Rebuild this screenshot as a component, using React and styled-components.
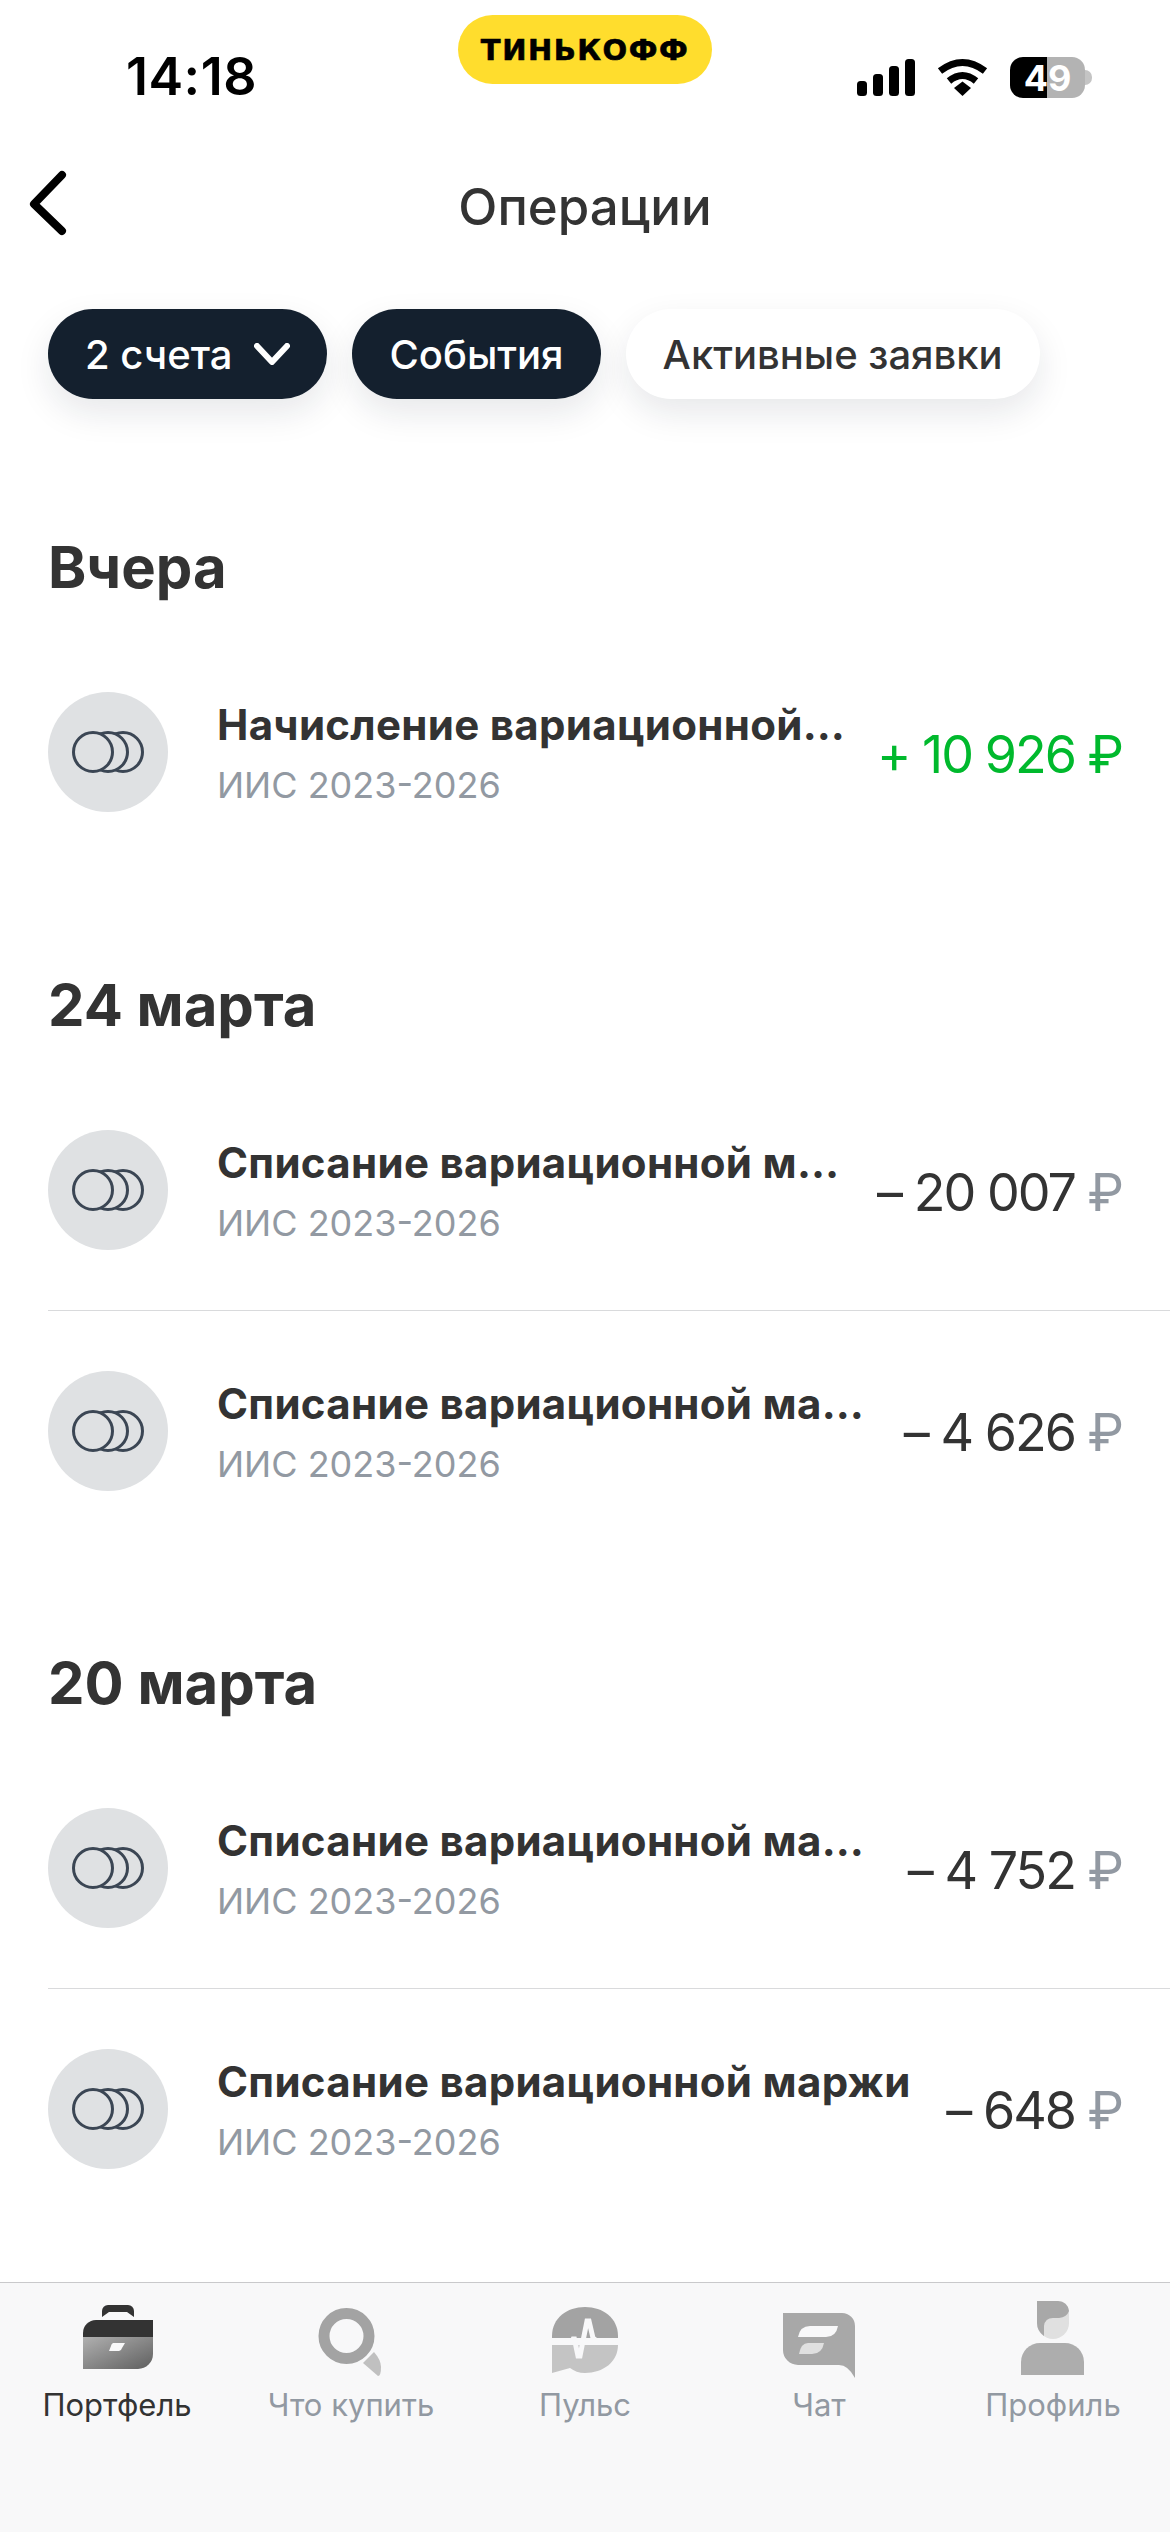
import React from 'react'
import styled, { createGlobalStyle } from 'styled-components'

const Global = createGlobalStyle`
  * { box-sizing: border-box; }
  body { margin: 0; background: #fff; font-family: Inter, "Noto Sans", sans-serif; color: #333; }
`

const Page = styled.div`
  width: 1170px;
  height: 2532px;
  display: flex;
  flex-direction: column;
  overflow: hidden;
`

const StatusBar = styled.div`
  height: 140px;
  display: grid;
  grid-template-columns: 1fr 254px 1fr;
`

const Time = styled.div`
  padding: 49px 0 0 126px;
  font-size: 52px;
  line-height: 56px;
  font-weight: 600;
  letter-spacing: 0.5px;
  color: #000;
`

const Logo = styled.div`
  margin-top: 15px;
  height: 69px;
  border-radius: 35px;
  background: #ffdd2d;
  display: flex;
  align-items: center;
  justify-content: center;
  font-family: "DejaVu Sans", sans-serif;
  font-size: 29px;
  font-weight: 700;
  letter-spacing: 1.5px;
  -webkit-text-stroke: 0.6px #000;
  color: #000;
`

const StatusIcons = styled.div`
  padding: 57px 0 0 145px;
  display: flex;
  align-items: flex-start;
  gap: 22px;
`

const Battery = styled.div`
  position: relative;
  width: 75px;
  height: 41px;
  border-radius: 13px;
  background: linear-gradient(90deg, #000 49%, #b3b3b3 49%);
  display: flex;
  align-items: center;
  justify-content: center;
  font-size: 36px;
  font-weight: 700;
  color: #fff;
  &::after {
    content: '';
    position: absolute;
    right: -7px;
    top: 13px;
    width: 7px;
    height: 15px;
    border-radius: 0 8px 8px 0;
    background: #c4c4c4;
  }
`

const NavBar = styled.div`
  position: relative;
  height: 169px;
  display: flex;
  justify-content: center;
  padding-top: 37px;
  font-size: 51px;
  line-height: 60px;
  font-weight: 500;
  color: #333;
  svg {
    position: absolute;
    left: 24px;
    top: 28px;
  }
`

const Chips = styled.div`
  display: flex;
  gap: 25px;
  padding-left: 48px;
  margin-bottom: 35px;
`

const Chip = styled.div`
  height: 90px;
  padding: 0 37px;
  border-radius: 45px;
  display: flex;
  align-items: center;
  gap: 22px;
  font-size: 40px;
  font-weight: 500;
  white-space: nowrap;
  background: ${({ $dark }) => ($dark ? '#14202e' : '#fff')};
  color: ${({ $dark }) => ($dark ? '#fff' : '#333')};
  box-shadow: 0 14px 34px rgba(20, 32, 46, 0.1);
`

const Section = styled.section`
  margin-top: 98px;
`

const SectionTitle = styled.h2`
  margin: 0 0 30px 48px;
  height: 70px;
  font-size: 58px;
  line-height: 70px;
  font-weight: 700;
  color: #333;
`

const Row = styled.div`
  height: 240px;
  margin-left: 48px;
  padding-right: 48px;
  display: flex;
  align-items: center;
  border-top: ${({ $divider }) => ($divider ? '1px solid #d9dadc' : 'none')};
`

const Avatar = styled.div`
  flex: none;
  width: 120px;
  height: 120px;
  border-radius: 50%;
  background: #dfe1e3;
  display: flex;
  align-items: center;
  justify-content: center;
  margin-right: 49px;
`

const RowText = styled.div`
  flex: 1;
  min-width: 0;
  margin-right: 28px;
  padding-top: 3px;
`

const RowTitle = styled.div`
  font-size: 42px;
  line-height: 50px;
  font-weight: 700;
  letter-spacing: 0.3px;
  color: #333;
  white-space: nowrap;
  overflow: hidden;
  text-overflow: ellipsis;
`

const RowSub = styled.div`
  margin-top: 13px;
  font-size: 36px;
  line-height: 44px;
  color: #9299a2;
`

const Amount = styled.div`
  flex: none;
  margin-top: 5px;
  font-size: 52px;
  line-height: 60px;
  letter-spacing: -2px;
  color: ${({ $plus }) => ($plus ? '#00b92d' : '#333')};
  white-space: nowrap;
  span {
    color: ${({ $plus }) => ($plus ? '#00b92d' : '#9299a2')};
  }
`

const TabBar = styled.nav`
  margin-top: auto;
  height: 250px;
  padding-top: 17px;
  border-top: 1px solid #c9c9cb;
  background: #f8f8f9;
  display: grid;
  grid-template-columns: repeat(5, 1fr);
`

const Tab = styled.div`
  display: flex;
  flex-direction: column;
  align-items: center;
  font-size: 31px;
  line-height: 36px;
  color: ${({ $active }) => ($active ? '#333' : '#9299a2')};
  svg {
    margin-bottom: 7px;
  }
`

const SignalIcon = () => (
  <svg width="58" height="41" viewBox="0 0 58 41" fill="#000">
    <rect x="0" y="24" width="10" height="15" rx="3.5" />
    <rect x="16" y="17" width="10" height="22" rx="3.5" />
    <rect x="32" y="9" width="10" height="30" rx="3.5" />
    <rect x="48" y="2" width="10" height="37" rx="3.5" />
  </svg>
)

const WifiIcon = () => (
  <svg width="51" height="41" viewBox="0 0 51 41" fill="none" stroke="#000" strokeWidth="7">
    <path d="M3 14 Q25.5 -3 48 14" />
    <path d="M12 24 Q25.5 13 39 24" />
    <path d="M17 31 L25.5 24.5 L34 31 L25.5 39 Z" fill="#000" stroke="none" />
  </svg>
)

const BackIcon = () => (
  <svg width="50" height="70" viewBox="0 0 50 70" fill="none" stroke="#000" strokeWidth="8" strokeLinecap="round" strokeLinejoin="round">
    <path d="M38 7 L10 36 L38 63" />
  </svg>
)

const ChevronIcon = () => (
  <svg width="36" height="22" viewBox="0 0 36 22" fill="none" stroke="#fff" strokeWidth="6" strokeLinecap="round" strokeLinejoin="round">
    <path d="M3 3 L18 19 L33 3" />
  </svg>
)

const CoinsIcon = () => (
  <svg width="72" height="42" viewBox="0 0 72 42" fill="#dfe1e3" stroke="#3b4654" strokeWidth="3">
    <circle cx="51" cy="21" r="19.5" />
    <circle cx="36" cy="21" r="19.5" />
    <circle cx="21" cy="21" r="19.5" />
  </svg>
)

const PortfolioIcon = () => (
  <svg width="90" height="80" viewBox="0 0 90 80">
    <defs>
      <linearGradient id="case" x1="0" y1="0" x2="1" y2="1">
        <stop offset="0" stopColor="#b0b0b0" />
        <stop offset="1" stopColor="#5f5f5f" />
      </linearGradient>
    </defs>
    <path d="M30 17 V11 a6 6 0 0 1 6-6 H56 a6 6 0 0 1 6 6 V17 L55 12 H37 Z" fill="#333" />
    <path d="M11 37 V33 a13 13 0 0 1 13-13 H81 V37 Z" fill="#333" />
    <path d="M11 37 H81 V54 a15 15 0 0 1-15 15 H11 Z" fill="url(#case)" />
    <path d="M41 43 H53 L50 48 a4 4 0 0 1-3 3 H37 L39 46 a4 4 0 0 1 2-3 Z" fill="#f8f8f9" />
  </svg>
)

const SearchIcon = () => (
  <svg width="90" height="80" viewBox="0 0 90 80">
    <path d="M57 63 L72 76 Q75 76 75 67 Q75 60 68 52 Z" fill="#c0c0c0" />
    <circle cx="40.5" cy="36" r="22.5" fill="none" stroke="#a3a3a3" strokeWidth="11" />
  </svg>
)

const PulseIcon = () => (
  <svg width="90" height="80" viewBox="0 0 90 80">
    <path d="M12 38 V36 C12 18 27 7 45 7 C63 7 78 18 78 36 V38 Z" fill="#a3a3a3" />
    <path d="M12 45 H78 C78 62 63 73 45 73 C39 73 34 71 30 68 L12 73 Z" fill="#c4c4c4" />
    <path d="M12 41.5 H30 Q33 41 34 37 L38 56 H40 L47 21 H49 L53 38 Q55 41 60 41.5 H78" fill="none" stroke="#f8f8f9" strokeWidth="5" />
  </svg>
)

const ChatIcon = () => (
  <svg width="90" height="80" viewBox="0 0 90 80">
    <path d="M9 13 H68 a13 13 0 0 1 13 13 V78 Q74 65 65 65 H24 a15 15 0 0 1-15-15 Z" fill="#a8a8a8" />
    <path d="M36 26 H64 Q62 37 52 37 H24 Q26 26 36 26 Z" fill="#f8f8f9" />
    <path d="M34 43 H50 Q48 54 38 54 H25 Q27 43 34 43 Z" fill="#e0e0e0" />
  </svg>
)

const ProfileIcon = () => (
  <svg width="90" height="80" viewBox="0 0 90 80">
    <path d="M13 75 V62 a19 19 0 0 1 19-19 H57 a19 19 0 0 1 19 19 V75 Z" fill="#adadad" />
    <path d="M29 1 H50 a11 11 0 0 1 11 11 V23 a16 16 0 0 1-32 0 Z" fill="#e0e0e0" />
    <path d="M29 1 H50 a11 11 0 0 1 11 10 Q59 17 51 18 H45 Q37 18 36 26 V36 Q29 31 29 23 Z" fill="#a8a8a8" />
  </svg>
)

const sections = [
  {
    title: 'Вчера',
    rows: [{ title: 'Начисление вариационной маржи', amount: '+ 10 926', plus: true }],
  },
  {
    title: '24 марта',
    rows: [
      { title: 'Списание вариационной маржи', amount: '– 20 007' },
      { title: 'Списание вариационной маржи', amount: '– 4 626' },
    ],
  },
  {
    title: '20 марта',
    rows: [
      { title: 'Списание вариационной маржи', amount: '– 4 752' },
      { title: 'Списание вариационной маржи', amount: '– 648' },
    ],
  },
]

const tabs = [
  { label: 'Портфель', icon: <PortfolioIcon />, active: true },
  { label: 'Что купить', icon: <SearchIcon /> },
  { label: 'Пульс', icon: <PulseIcon /> },
  { label: 'Чат', icon: <ChatIcon /> },
  { label: 'Профиль', icon: <ProfileIcon /> },
]

const App = () => {
  return (
    <Page>
      <Global />
      <StatusBar>
        <Time>14:18</Time>
        <Logo>ТИНЬКОФФ</Logo>
        <StatusIcons>
          <SignalIcon />
          <WifiIcon />
          <Battery>49</Battery>
        </StatusIcons>
      </StatusBar>
      <NavBar>
        <BackIcon />
        Операции
      </NavBar>
      <Chips>
        <Chip $dark>2 счета <ChevronIcon /></Chip>
        <Chip $dark>События</Chip>
        <Chip>Активные заявки</Chip>
      </Chips>
      {sections.map((section) => (
        <Section key={section.title}>
          <SectionTitle>{section.title}</SectionTitle>
          {section.rows.map((row, i) => (
            <Row key={i} $divider={i > 0}>
              <Avatar><CoinsIcon /></Avatar>
              <RowText>
                <RowTitle>{row.title}</RowTitle>
                <RowSub>ИИС 2023-2026</RowSub>
              </RowText>
              <Amount $plus={row.plus}>{row.amount} <span>₽</span></Amount>
            </Row>
          ))}
        </Section>
      ))}
      <TabBar>
        {tabs.map((tab) => (
          <Tab key={tab.label} $active={tab.active}>
            {tab.icon}
            {tab.label}
          </Tab>
        ))}
      </TabBar>
    </Page>
  )
}

export default App
